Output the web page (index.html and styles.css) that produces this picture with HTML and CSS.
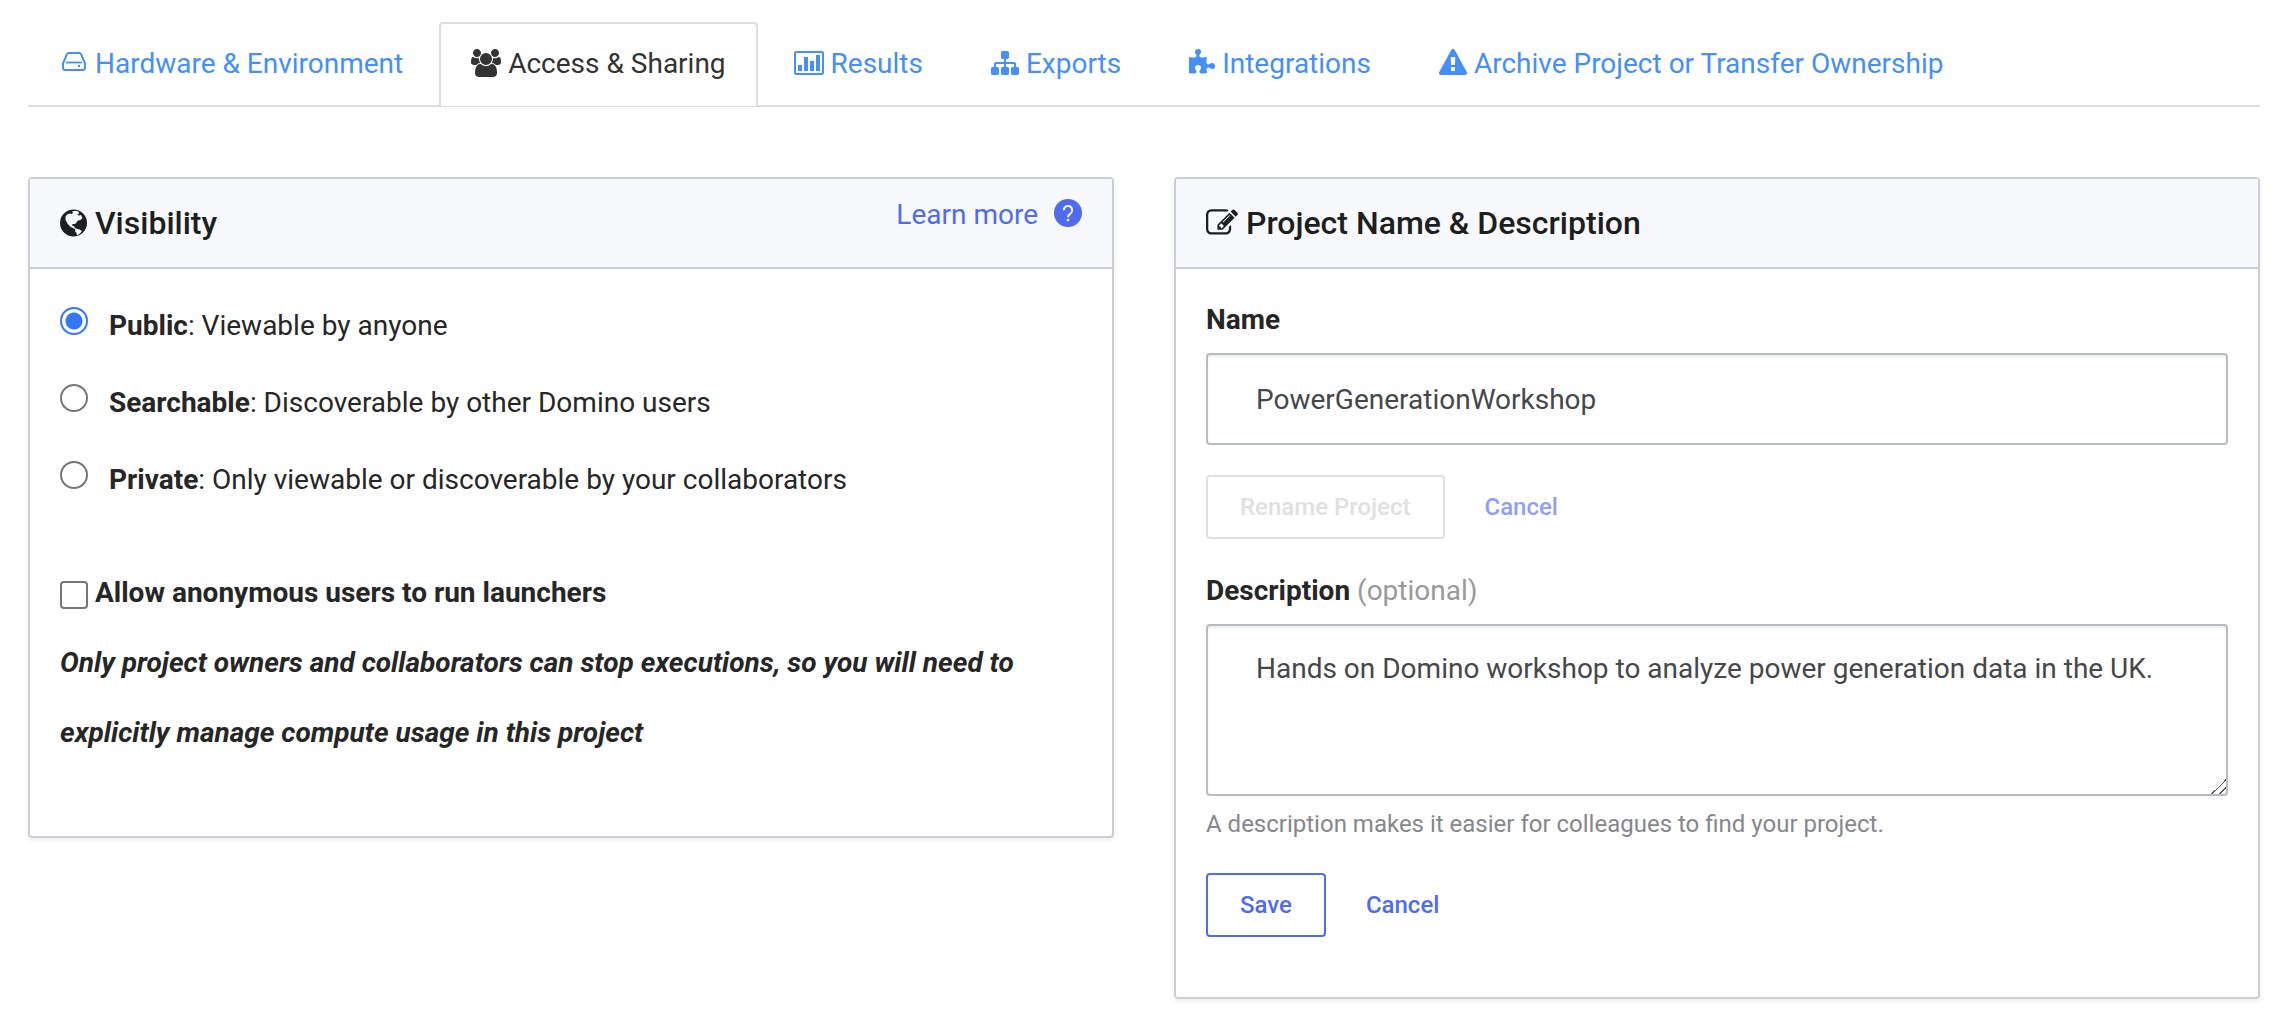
FILE: index.html
```html
<!DOCTYPE html>
<html lang="en">
<head>
<meta charset="utf-8">
<title>Project Settings</title>
<link rel="stylesheet" href="styles.css">
</head>
<body>
<nav class="tabs" aria-label="Project settings">
  <a class="tab" href="#hardware"><svg class="icon" width="26" height="28" viewBox="0 0 26 28" fill="none" stroke="currentColor" stroke-width="2"><path d="M1 14.500 L4.600 5.800 Q5.300 4 7.200 4 H16.800 Q18.700 4 19.400 5.800 L23 14.500 V18.500 Q23 21 20.500 21 H3.500 Q1 21 1 18.500 Z"/><path d="M4 13.500H20" stroke-width="1.800"/><path d="M16 17h2" /></svg> Hardware &amp; Environment</a>
  <a class="tab tab-active" href="#access" aria-current="page"><svg class="icon" width="30" height="28" viewBox="64 0 1920 1792" fill="currentColor"><path d="M657 896q-162 5-265 128h-134q-82 0-138-40.500t-56-118.500q0-353 124-353 6 0 43.500 21t97.500 42.500 119 21.500q67 0 133-23-5 37-5 66 0 139 81 256zm1071 637q0 120-73 189.500t-194 69.500h-874q-121 0-194-69.500t-73-189.500q0-53 3.500-103.500t14-109 26.500-108.500 43-97.500 62-81 85.500-53.500 111.500-20q10 0 43 21.500t73 48 107 48 135 21.500 135-21.500 107-48 73-48 43-21.500q61 0 111.500 20t85.500 53.500 62 81 43 97.500 26.500 108.500 14 109 3.500 103.500zm-1024-1277q0 106-75 181t-181 75-181-75-75-181 75-181 181-75 181 75 75 181zm704 384q0 159-112.500 271.500t-271.500 112.500-271.500-112.500-112.500-271.500 112.500-271.500 271.500-112.500 271.500 112.500 112.500 271.500zm576 225q0 78-56 118.500t-138 40.500h-134q-103-123-265-128 81-117 81-256 0-29-5-66 66 23 133 23 59 0 119-21.500t97.500-42.500 43.500-21q124 0 124 353zm-128-609q0 106-75 181t-181 75-181-75-75-181 75-181 181-75 181 75 75 181z"/></svg> Access &amp; Sharing</a>
  <a class="tab" href="#results"><svg class="icon" width="30" height="28" viewBox="0 0 30 28"><rect x="1" y="3" width="28" height="22" rx="1.500" fill="none" stroke="currentColor" stroke-width="2"/><path fill="currentColor" d="M4 16h4v6H4zM10 8h4v14h-4zM16 12h4v10h-4zM22 6h4v16h-4z"/></svg> Results</a>
  <a class="tab" href="#exports"><svg class="icon" width="28" height="28" viewBox="0 0 1792 1792" fill="currentColor"><path d="M1792 1248v320q0 40-28 68t-68 28h-320q-40 0-68-28t-28-68v-320q0-40 28-68t68-28h96v-192h-512v192h96q40 0 68 28t28 68v320q0 40-28 68t-68 28h-320q-40 0-68-28t-28-68v-320q0-40 28-68t68-28h96v-192h-512v192h96q40 0 68 28t28 68v320q0 40-28 68t-68 28h-320q-40 0-68-28t-28-68v-320q0-40 28-68t68-28h96v-192q0-52 38-90t90-38h512v-192h-96q-40 0-68-28t-28-68v-320q0-40 28-68t68-28h320q40 0 68 28t28 68v320q0 40-28 68t-68 28h-96v192h512q52 0 90 38t38 90v192h96q40 0 68 28t28 68z"/></svg> Exports</a>
  <a class="tab" href="#integrations"><svg class="icon" width="26" height="28" viewBox="64 0 1664 1792" fill="currentColor"><path d="M1728 1098q0 81-44.500 135t-123.500 54q-41 0-77.500-17.500t-59-38-56.500-38-71-17.500q-110 0-110 124 0 39 16 115t15 115v5q-22 0-33 1-34 3-97.500 11.500t-115.500 13.500-98 5q-61 0-103-26.500t-42-83.500q0-37 17.500-71t38-56.500 38-59 17.500-77.500q0-79-54-123.500t-135-44.500q-84 0-143 45.500t-59 127.500q0 43 15 83t33.500 64.500 33.500 53 15 50.500q0 45-46 89-37 35-117 35-95 0-245-24-9-2-27.500-4t-27.500-4l-13-2q-1 0-3-1-2 0-2-1v-1024q2 1 17.500 3.500t34 5 21.500 3.500q150 24 245 24 80 0 117-35 46-44 46-89 0-22-15-50.500t-33.500-53-33.500-64.500-15-83q0-82 59-127.500t144-45.500q80 0 134 44.500t54 123.500q0 41-17.500 77.500t-38 59-38 56.500-17.500 71q0 57 42 83.500t103 26.500q64 0 180-15t163-17v2q-1 2-3.500 17.500t-5 34-3.500 21.500q-24 150-24 245 0 80 35 117 44 46 89 46 22 0 50.500-15t53-33.500 64.500-33.500 83-15q82 0 127.500 59t45.500 143z"/></svg> Integrations</a>
  <a class="tab" href="#archive"><svg class="icon" width="28" height="28" viewBox="0 0 1792 1792" fill="currentColor"><path d="M1024 1375v-190q0-14-9.500-23.500t-22.500-9.500h-192q-13 0-22.500 9.500t-9.500 23.500v190q0 14 9.500 23.500t22.500 9.500h192q13 0 22.500-9.500t9.500-23.500zm-2-374l18-459q0-12-10-19-13-11-24-11h-220q-11 0-24 11-10 7-10 21l17 457q0 10 10 16.500t24 6.500h185q14 0 23.500-6.500t10.500-16.500zm-14-934l768 1408q35 63-2 126-17 29-46.500 46t-63.500 17h-1536q-34 0-63.500-17t-46.500-46q-37-63-2-126l768-1408q17-31 47-49t65-18 65 18 47 49z"/></svg> Archive Project or Transfer Ownership</a>
</nav>

<main class="panels">
  <section class="panel">
    <header class="panel-header">
      <h2 class="panel-title"><svg class="icon-lg" width="27" height="32" viewBox="0 0 27 32"><circle cx="13.500" cy="16" r="13.500" fill="currentColor"/><path fill="#f8f9fc" d="M5.500 9.500 7 7.500 10 6.500 12 7 13 5.500 12 4.500 15 3.800 18.500 4.500 19 6.500 17 8 19.500 8.500 21 8 22.500 11 20.500 13 18 13.500 16.500 15.500 15 17 12.500 17 12 18.500 14 19 14.500 20.500 16.500 21.800 19.500 22.500 22 24 20 26.500 17 28.500 16.500 26 15 24 15.500 22.200 13 21 10 19.500 7.500 16.500 5.500 13z"/></svg> Visibility</h2>
      <a class="learn-more" href="#help">Learn more
        <svg width="28" height="28" viewBox="0 0 28 28"><circle cx="14" cy="14" r="14" fill="currentColor"/><path d="M9.800 11.200a4.200 4.200 0 1 1 6.600 3.400c-1.600 1.100-2.400 1.800-2.400 3.600" fill="none" stroke="#fff" stroke-width="1.900"/><circle cx="14" cy="21" r="1.300" fill="#fff"/></svg>
      </a>
    </header>
    <div class="panel-body visibility-body">
      <label class="option"><input class="radio" type="radio" name="visibility" checked><span><b>Public</b>: Viewable by anyone</span></label>
      <label class="option"><input class="radio" type="radio" name="visibility"><span><b>Searchable</b>: Discoverable by other Domino users</span></label>
      <label class="option"><input class="radio" type="radio" name="visibility"><span><b>Private</b>: Only viewable or discoverable by your collaborators</span></label>
      <div class="anonymous">
        <label><input class="checkbox" type="checkbox"> Allow anonymous users to run launchers</label>
        <p class="note">Only project owners and collaborators can stop executions, so you will need to explicitly manage compute usage in this project</p>
      </div>
    </div>
  </section>

  <section class="panel">
    <header class="panel-header">
      <h2 class="panel-title"><svg class="icon-lg" width="32" height="32" viewBox="0 0 1792 1792" fill="currentColor"><path d="M888 1184l116-116-152-152-116 116v56h96v96h56zm440-720q-16-16-33 1l-350 350q-17 17-1 33t33-1l350-350q17-17 1-33zm80 594v190q0 119-84.500 203.500t-203.500 84.500h-832q-119 0-203.500-84.500t-84.500-203.500v-832q0-119 84.500-203.500t203.500-84.500h832q63 0 117 25 15 7 18 23 3 17-9 29l-49 49q-14 14-32 8-23-6-45-6h-832q-66 0-113 47t-47 113v832q0 66 47 113t113 47h832q66 0 113-47t47-113v-126q0-13 9-22l64-64q15-15 35-7t20 29zm-96-738l288 288-672 672h-288v-288zm444 132l-92 92-288-288 92-92q28-28 68-28t68 28l152 152q28 28 28 68t-28 68z"/></svg> Project Name &amp; Description</h2>
    </header>
    <div class="panel-body details-body">
      <form class="form">
        <label class="field-label" for="name">Name</label>
        <input class="field" id="name" type="text" value="PowerGenerationWorkshop">
        <div class="actions">
          <button class="button" type="submit" disabled>Rename Project</button>
          <button class="button-link" type="button" disabled>Cancel</button>
        </div>
      </form>
      <form class="form">
        <label class="field-label" for="description">Description <span class="optional">(optional)</span></label>
        <textarea class="field field-area" id="description">Hands on Domino workshop to analyze power generation data in the UK.</textarea>
        <p class="help">A description makes it easier for colleagues to find your project.</p>
        <div class="actions">
          <button class="button" type="submit">Save</button>
          <button class="button-link" type="button">Cancel</button>
        </div>
      </form>
    </div>
  </section>
</main>
</body>
</html>
```
FILE: styles.css
```css
* {
  box-sizing: border-box;
}

body {
  margin: 0;
  padding: 22px 26px 15px 28px;
  background: #fff;
  color: #262626;
  font: 400 28px/40px Roboto, sans-serif;
}

/* Tabs */
.tabs {
  display: flex;
  gap: 4px;
  padding-left: 2px;
  border-bottom: 2px solid #ddd;
}

.tab {
  margin-bottom: -1px;
  padding: 20px 30px 22px;
  border: 2px solid transparent;
  border-bottom: 0;
  border-radius: 4px 4px 0 0;
  color: #448ff8;
  text-decoration: none;
  white-space: nowrap;
}

.tab-active {
  border-color: #ddd;
  background: #fff;
  color: #333;
}

.icon {
  vertical-align: -4px;
}

.icon-lg {
  vertical-align: -5px;
}

/* Panels */
.panels {
  display: grid;
  grid-template-columns: 1fr 1fr;
  align-items: start;
  gap: 60px;
  margin-top: 70px;
}

.panel {
  border: 2px solid #ccd0d6;
  border-radius: 4px;
  box-shadow: 0 2px 4px rgba(0, 0, 0, 0.08);
}

.panel-header {
  display: flex;
  justify-content: space-between;
  align-items: flex-start;
  padding: 16px 30px;
  border-bottom: 2px solid #ccd0d6;
  background: #f8f9fc;
}

.panel-title {
  margin: 0;
  padding: 8px 0;
  color: #1d1e20;
  font-size: 32px;
  font-weight: 500;
}

.learn-more {
  display: flex;
  align-items: center;
  gap: 16px;
  color: #4f6bf0;
  text-decoration: none;
}

.learn-more svg {
  margin-bottom: 4px;
}

.panel-body {
  padding: 31px 30px 60px;
}

.visibility-body {
  padding-bottom: 68px;
}

/* Visibility options */
.option {
  display: flex;
  align-items: flex-start;
  gap: 21px;
  padding: 6px 0 31px;
}

.radio,
.checkbox {
  appearance: none;
  flex: none;
  width: 28px;
  height: 28px;
  margin: 0;
  border: 2px solid #767676;
  background: #fff;
}

.radio {
  margin-top: 1px;
  border-radius: 50%;
}

.radio:checked {
  border-color: #3478f6;
  background: radial-gradient(circle, #3478f6 8px, #fff 9px);
}

.checkbox {
  border-radius: 4px;
  vertical-align: middle;
}

.anonymous {
  margin-top: 27px;
  font-weight: 700;
  line-height: 70px;
}

.note {
  margin: 0;
  font-style: italic;
}

/* Name and description */
.details-body,
.form {
  display: flex;
  flex-direction: column;
}

.details-body {
  gap: 32px;
}

.field-label {
  margin-bottom: 13px;
  font-weight: 700;
}

.optional {
  color: #999;
  font-weight: 400;
}

.field {
  display: block;
  width: 100%;
  height: 92px;
  padding: 24px 48px;
  border: 2px solid #b8bcc2;
  border-radius: 4px;
  background: #fff;
  box-shadow: inset 0 2px 2px rgba(0, 0, 0, 0.07);
  color: #45474b;
  font: inherit;
}

.field-area {
  height: 172px;
  padding-top: 23px;
  resize: vertical;
}

.field-area::-webkit-resizer {
  background: linear-gradient(135deg, transparent 50%, #555 50% 56%, transparent 56% 76%, #555 76% 82%, transparent 82%);
}

.help {
  margin: 12px 0 3px;
  color: #85878c;
  font-size: 24px;
  line-height: 32px;
}

.actions {
  display: flex;
  gap: 38px;
  margin-top: 30px;
}

.button,
.button-link {
  height: 64px;
  border: 2px solid #4f6bf0;
  border-radius: 4px;
  background: #fff;
  color: #4f6bf0;
  font: 500 24px/32px Roboto, sans-serif;
}

.button {
  padding: 0 32px;
}

.button:disabled {
  border-color: #e0e0e0;
  color: #e0e0e0;
}

.button-link {
  padding: 0;
  border-color: transparent;
}

.button-link:disabled {
  color: #8f9ff8;
}
```
